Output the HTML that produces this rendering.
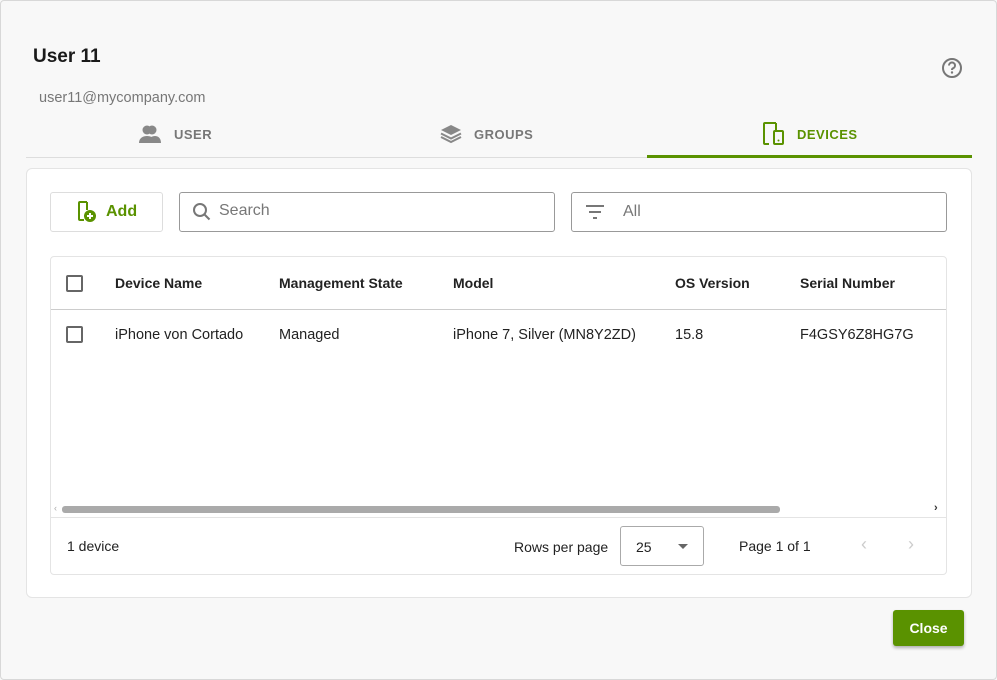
<!DOCTYPE html>
<html><head><style>
*{box-sizing:border-box;margin:0;padding:0}
body{width:997px;height:680px;background:#f8f8f8;font-family:"Liberation Sans",sans-serif;position:relative;overflow:hidden}
.a{position:absolute}
.t{font-size:14.5px;color:#222}
.h{font-size:14px;font-weight:bold;color:#222}
.cb{position:absolute;width:17px;height:17px;border:2px solid #666;border-radius:2px}
</style></head><body>
<div class="a" style="left:0;top:0;width:997px;height:680px;border:1px solid #d8d8d8;border-radius:4px"></div>
<div class="a" style="left:33px;top:46px;font-size:19px;font-weight:bold;color:#1a1a1a">User 11</div>
<div class="a" style="left:39px;top:90px;font-size:14.5px;color:#777">user11@mycompany.com</div>
<svg class="a" style="left:941px;top:57px" width="22" height="22" viewBox="0 0 22 22"><circle cx="11" cy="11" r="9" fill="none" stroke="#777" stroke-width="2"/><path d="M8 8.5a3 3 0 1 1 4 2.8c-.8.4-1 .9-1 1.7" fill="none" stroke="#777" stroke-width="2"/><circle cx="11" cy="15.5" r="1.2" fill="#777"/></svg>
<svg class="a" style="left:138px;top:124px" width="24" height="20" viewBox="0 0 24 20"><circle cx="9" cy="6" r="4.5" fill="#888"/><circle cx="14" cy="6" r="4.5" fill="#888"/><path d="M1 19c0-5 4-7 8-7s8 2 8 7z M10 19c0-5 4-7 7-7s6 2 6 7z" fill="#888"/></svg>
<div class="a" style="left:174px;top:127px;font-size:13px;font-weight:bold;color:#777;letter-spacing:.5px">USER</div>
<svg class="a" style="left:440px;top:124px" width="22" height="20" viewBox="0 0 22 20"><path d="M11 1 21 6 11 11 1 6z" fill="#888"/><path d="M1 9.5 11 14.5 21 9.5M1 13 11 18 21 13" fill="none" stroke="#888" stroke-width="2"/></svg>
<div class="a" style="left:474px;top:127px;font-size:13px;font-weight:bold;color:#777;letter-spacing:.5px">GROUPS</div>
<svg class="a" style="left:762px;top:121px" width="24" height="25" viewBox="0 0 24 25"><path d="M14 2H3a1 1 0 0 0-1 1v19a1 1 0 0 0 1 1h4" fill="none" stroke="#5a9200" stroke-width="2"/><path d="M14 2v7" stroke="#5a9200" stroke-width="2"/><rect x="12" y="10" width="9" height="13" rx="1" fill="none" stroke="#5a9200" stroke-width="2"/><circle cx="16.5" cy="19.5" r="1" fill="#5a9200"/></svg>
<div class="a" style="left:797px;top:127px;font-size:13px;font-weight:bold;color:#5a9200;letter-spacing:.5px">DEVICES</div>
<div class="a" style="left:26px;top:157px;width:946px;height:1px;background:#ddd"></div>
<div class="a" style="left:647px;top:155px;width:325px;height:3px;background:#5a9200"></div>
<div class="a" style="left:26px;top:168px;width:946px;height:430px;background:#fff;border:1px solid #e4e4e4;border-radius:6px"></div>
<div class="a" style="left:50px;top:192px;width:113px;height:40px;border:1px solid #ddd;border-radius:3px"></div>
<svg class="a" style="left:77px;top:201px" width="22" height="22" viewBox="0 0 22 22"><path d="M10 1H3a1 1 0 0 0-1 1v16a1 1 0 0 0 1 1h4M10 1v8" fill="none" stroke="#5a9200" stroke-width="2"/><circle cx="13" cy="15" r="6" fill="#5a9200"/><path d="M13 12v6M10 15h6" stroke="#fff" stroke-width="2"/></svg>
<div class="a" style="left:106px;top:203px;font-size:16px;font-weight:bold;color:#5a9200">Add</div>
<div class="a" style="left:179px;top:192px;width:376px;height:40px;border:1px solid #999;border-radius:3px"></div>
<svg class="a" style="left:192px;top:202px" width="20" height="20" viewBox="0 0 20 20"><circle cx="8" cy="8" r="6" fill="none" stroke="#777" stroke-width="2"/><path d="M12.5 12.5l5 5" stroke="#777" stroke-width="2"/></svg>
<div class="a" style="left:219px;top:202px;font-size:16px;color:#777">Search</div>
<div class="a" style="left:571px;top:192px;width:376px;height:40px;border:1px solid #999;border-radius:3px"></div>
<svg class="a" style="left:585px;top:204px" width="20" height="16" viewBox="0 0 20 16"><path d="M1 2h18M4 8h12M8 14h4" stroke="#777" stroke-width="2"/></svg>
<div class="a" style="left:623px;top:203px;font-size:16px;color:#777">All</div>
<div class="a" style="left:50px;top:256px;width:897px;height:319px;border:1px solid #e4e4e4;border-radius:4px"></div>
<div class="cb" style="left:66px;top:275px"></div>
<div class="a h" style="left:115px;top:275px">Device Name</div>
<div class="a h" style="left:279px;top:275px">Management State</div>
<div class="a h" style="left:453px;top:275px">Model</div>
<div class="a h" style="left:675px;top:275px">OS Version</div>
<div class="a h" style="left:800px;top:275px">Serial Number</div>
<div class="a" style="left:51px;top:309px;width:895px;height:1px;background:#ccc"></div>
<div class="cb" style="left:66px;top:326px"></div>
<div class="a t" style="left:115px;top:327px">iPhone von Cortado</div>
<div class="a t" style="left:279px;top:327px">Managed</div>
<div class="a t" style="left:453px;top:327px">iPhone 7, Silver (MN8Y2ZD)</div>
<div class="a t" style="left:675px;top:327px">15.8</div>
<div class="a t" style="left:800px;top:327px">F4GSY6Z8HG7G</div>
<div class="a" style="left:54px;top:503px;font-size:9px;color:#aaa">‹</div>
<div class="a" style="left:934px;top:502px;font-size:11px;color:#333;font-weight:bold">›</div>
<div class="a" style="left:62px;top:506px;width:718px;height:7px;background:#aaa;border-radius:3px"></div>
<div class="a" style="left:51px;top:517px;width:895px;height:1px;background:#e4e4e4"></div>
<div class="a" style="left:67px;top:538px;font-size:14px;color:#222">1 device</div>
<div class="a" style="left:514px;top:539px;font-size:14px;color:#222">Rows per page</div>
<div class="a" style="left:620px;top:526px;width:84px;height:40px;border:1px solid #aaa;border-radius:3px"></div>
<div class="a" style="left:636px;top:539px;font-size:14px;color:#222">25</div>
<div class="a" style="left:678px;top:544px;border-left:5px solid transparent;border-right:5px solid transparent;border-top:5px solid #666"></div>
<div class="a" style="left:739px;top:538px;font-size:14px;color:#222">Page 1 of 1</div>
<div class="a" style="left:861px;top:534px;font-size:18px;color:#ccc">‹</div>
<div class="a" style="left:908px;top:534px;font-size:18px;color:#ccc">›</div>
<div class="a" style="left:893px;top:610px;width:71px;height:36px;background:#5a9200;border-radius:3px;box-shadow:0 2px 3px rgba(0,0,0,.3);color:#fff;font-weight:bold;font-size:14px;text-align:center;line-height:36px">Close</div>
</body></html>
